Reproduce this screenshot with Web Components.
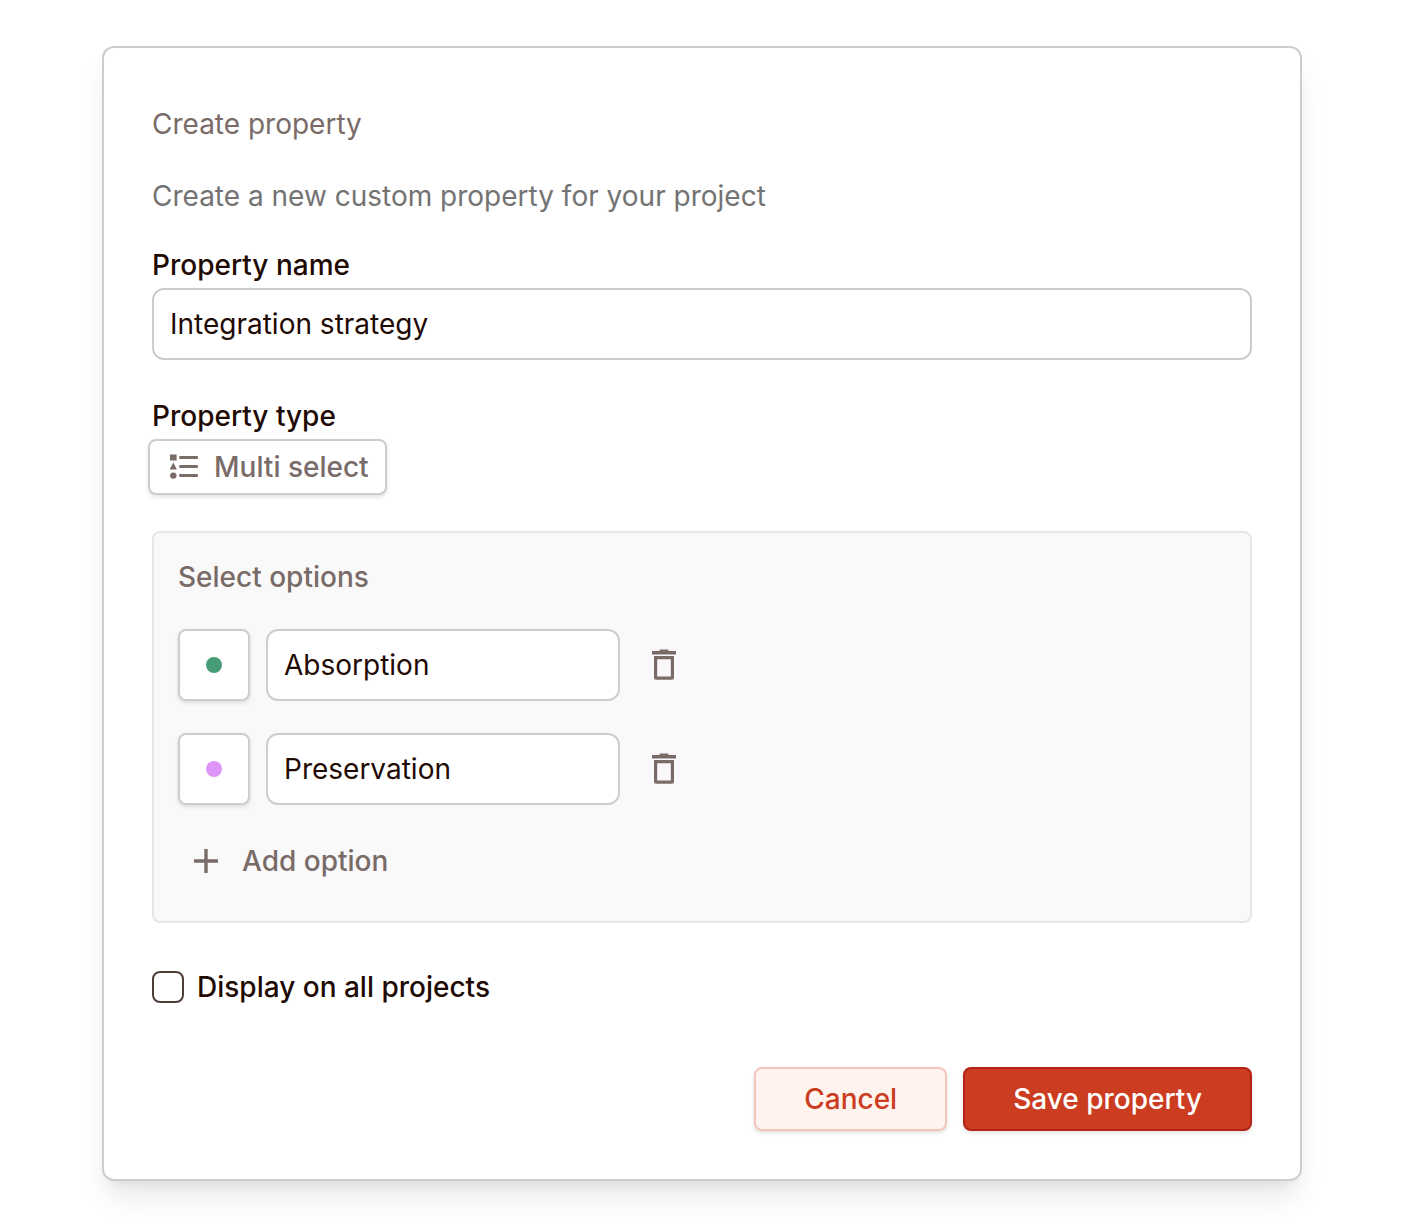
<!DOCTYPE html>
<html lang="en">
  <head>
    <meta charset="utf-8" />
    <meta name="viewport" content="width=device-width, initial-scale=1" />
    <title>Create property</title>
    <style>
      :root {
        --text: #1f0a04;
        --muted: #796b67;
        --border: #d1cccc;
        --primary: #cb3c20;
        --button-shadow: 0 2px 4px rgb(0 0 0 / 12%);
      }

      body {
        margin: 0;
        padding: 46px 102px 46px;
        background: white;
        color: var(--text);
        font-family: Inter, "Liberation Sans", sans-serif;
        font-size: 28px;
        font-optical-sizing: none;
        line-height: 40px;
      }
    </style>
  </head>
  <body>
    <property-dialog>
      <span slot="title">Create property</span>
      <span slot="description">Create a new custom property for your project</span>
      <text-field label="Property name" value="Integration strategy"></text-field>
      <type-picker label="Property type" value="Multi select"></type-picker>
      <option-list>
        <option-row color="#459c76" value="Absorption"></option-row>
        <option-row color="#de95f7" value="Preservation"></option-row>
      </option-list>
      <check-field>Display on all projects</check-field>
      <action-button slot="actions">Cancel</action-button>
      <action-button slot="actions" primary>Save property</action-button>
    </property-dialog>

    <script>
      const html = String.raw;

      const inputStyle = html`
        <style>
          input {
            box-sizing: border-box;
            width: 100%;
            height: 72px;
            padding: 0 16px;
            border: 2px solid var(--border);
            border-radius: 12px;
            background: white;
            color: var(--text);
            font: inherit;
          }
        </style>
      `;

      function makeTemplate(markup) {
        const template = document.createElement("template");
        template.innerHTML = markup;
        return template;
      }

      class BaseElement extends HTMLElement {
        constructor() {
          super();
          this.attachShadow({ mode: "open" });
        }

        connectedCallback() {
          const dom = this.constructor.template.content.cloneNode(true);
          this.fill(dom);
          this.shadowRoot.replaceChildren(dom);
        }

        fill() {}
      }

      class PropertyDialog extends BaseElement {
        static template = makeTemplate(html`
          <style>
            :host {
              display: block;
              padding: 56px 48px 48px;
              border: 2px solid var(--border);
              border-radius: 12px;
              background: white;
              box-shadow:
                0 20px 30px -6px rgb(0 0 0 / 10%),
                0 8px 12px -8px rgb(0 0 0 / 10%);
            }

            h1,
            p {
              margin: 0;
              font-size: inherit;
              font-weight: 400;
            }

            h1 {
              margin-bottom: 32px;
              color: var(--muted);
            }

            p {
              margin-bottom: 29px;
              color: #737373;
            }

            .fields {
              display: flex;
              flex-direction: column;
              gap: 36px;
            }

            footer {
              display: flex;
              justify-content: flex-end;
              gap: 16px;
              margin-top: 54px;
            }
          </style>
          <h1><slot name="title"></slot></h1>
          <p><slot name="description"></slot></p>
          <div class="fields"><slot></slot></div>
          <footer><slot name="actions"></slot></footer>
        `);
      }

      class TextField extends BaseElement {
        static template = makeTemplate(html`
          ${inputStyle}
          <style>
            :host {
              display: flex;
              flex-direction: column;
              gap: 3px;
            }

            label {
              font-weight: 500;
            }
          </style>
          <label for="field"></label>
          <input id="field" type="text" />
        `);

        fill(dom) {
          dom.querySelector("label").textContent = this.getAttribute("label");
          dom.querySelector("input").value = this.getAttribute("value");
        }
      }

      class TypePicker extends BaseElement {
        static template = makeTemplate(html`
          <style>
            :host {
              display: flex;
              flex-direction: column;
              align-items: flex-start;
              gap: 3px;
            }

            label {
              font-weight: 500;
            }

            .trigger {
              display: flex;
              align-items: center;
              gap: 16px;
              box-sizing: border-box;
              height: 56px;
              margin-left: -4px;
              padding: 0 16px 0 20px;
              border: 2px solid var(--border);
              border-radius: 8px;
              background: white;
              box-shadow: var(--button-shadow);
              color: var(--muted);
            }

            select {
              appearance: none;
              padding: 0;
              border: none;
              background: none;
              color: inherit;
              font: inherit;
              font-weight: 500;
            }
          </style>
          <label for="type"></label>
          <div class="trigger">
            <svg width="28" height="28" viewBox="0 0 28 28" fill="currentColor" aria-hidden="true">
              <path d="M0 1.5h6.6v6H0zM3.3 9.6l3.6 6.8h-7.2z" />
              <circle cx="3.3" cy="22.6" r="3.2" />
              <path d="M9.3 3h18.5v3H9.3zM9.3 12h18.5v3H9.3zM9.3 21h18.5v3H9.3z" />
            </svg>
            <select id="type"><option></option></select>
          </div>
        `);

        fill(dom) {
          dom.querySelector("label").textContent = this.getAttribute("label");
          dom.querySelector("option").textContent = this.getAttribute("value");
        }
      }

      class OptionList extends BaseElement {
        static template = makeTemplate(html`
          <style>
            :host {
              display: block;
              padding: 24px 24px 36px;
              border: 2px solid #e6e6e6;
              border-radius: 8px;
              background: #f9f9f9;
            }

            h2 {
              margin: 0 0 32px;
              color: var(--muted);
              font-size: inherit;
              font-weight: 500;
            }

            .rows {
              display: flex;
              flex-direction: column;
              gap: 32px;
            }

            button {
              display: flex;
              align-items: center;
              gap: 24px;
              margin-top: 32px;
              padding: 4px 16px;
              border: none;
              background: none;
              color: var(--muted);
              font: inherit;
              font-weight: 500;
            }
          </style>
          <h2>Select options</h2>
          <div class="rows"><slot></slot></div>
          <button type="button">
            <svg width="24" height="24" viewBox="0 0 24 24" fill="currentColor" aria-hidden="true">
              <path d="M10.3 0h3.4v10.3H24v3.4H13.7V24h-3.4V13.7H0v-3.4h10.3z" />
            </svg>
            Add option
          </button>
        `);
      }

      class OptionRow extends BaseElement {
        static template = makeTemplate(html`
          ${inputStyle}
          <style>
            :host {
              display: flex;
              align-items: center;
              gap: 16px;
            }

            input {
              width: 354px;
            }

            button {
              display: grid;
              place-items: center;
              padding: 0;
            }

            .color {
              box-sizing: border-box;
              width: 72px;
              height: 72px;
              border: 2px solid var(--border);
              border-radius: 8px;
              background: white;
              box-shadow: var(--button-shadow);
            }

            .dot {
              width: 16px;
              height: 16px;
              border-radius: 50%;
            }

            .delete {
              width: 56px;
              height: 56px;
              border: none;
              background: none;
              color: var(--muted);
            }
          </style>
          <button class="color" type="button" aria-label="Color">
            <span class="dot"></span>
          </button>
          <input type="text" aria-label="Option name" />
          <button class="delete" type="button" aria-label="Delete option">
            <svg width="32" height="32" viewBox="0 0 32 32" fill="currentColor" aria-hidden="true">
              <path d="M4 2h7l1.4-1.6h7.2L21 2h7v3.400H4z" />
              <path
                fill-rule="evenodd"
                d="M6 7h20v21.700a2 2 0 0 1-2 2H8a2 2 0 0 1-2-2zM9.200 10.200v17.400h13.600v-17.400z"
              />
            </svg>
          </button>
        `);

        fill(dom) {
          dom.querySelector(".dot").style.background = this.getAttribute("color");
          dom.querySelector("input").value = this.getAttribute("value");
        }
      }

      class CheckField extends BaseElement {
        static template = makeTemplate(html`
          <style>
            :host {
              display: block;
              margin-top: 8px;
            }

            label {
              display: inline-flex;
              align-items: center;
              gap: 13px;
              font-weight: 500;
            }

            input {
              appearance: none;
              box-sizing: border-box;
              width: 32px;
              height: 32px;
              margin: 0;
              border: 2px solid #4d3d39;
              border-radius: 8px;
            }

            input:checked {
              background: #4d3d39;
            }
          </style>
          <label><input type="checkbox" /><slot></slot></label>
        `);
      }

      class ActionButton extends BaseElement {
        static template = makeTemplate(html`
          <style>
            :host {
              display: block;
              --bg: #fef3ee;
              --edge: #f5c5bc;
              --fg: var(--primary);
            }

            :host([primary]) {
              --bg: var(--primary);
              --edge: #b42318;
              --fg: white;
            }

            button {
              box-sizing: border-box;
              height: 64px;
              padding: 0 48px;
              border: 2px solid var(--edge);
              border-radius: 8px;
              background: var(--bg);
              box-shadow: var(--button-shadow);
              color: var(--fg);
              font: inherit;
              font-weight: 500;
            }
          </style>
          <button type="button"><slot></slot></button>
        `);
      }

      customElements.define("property-dialog", PropertyDialog);
      customElements.define("text-field", TextField);
      customElements.define("type-picker", TypePicker);
      customElements.define("option-list", OptionList);
      customElements.define("option-row", OptionRow);
      customElements.define("check-field", CheckField);
      customElements.define("action-button", ActionButton);
    </script>
  </body>
</html>
